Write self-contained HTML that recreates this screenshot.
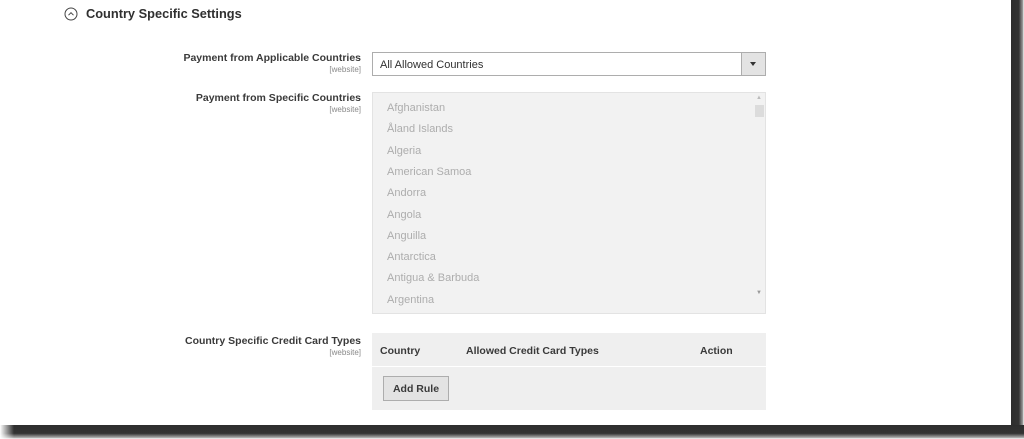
<!DOCTYPE html>
<html><head><meta charset="utf-8"><style>
*{margin:0;padding:0;box-sizing:border-box}
body{width:1024px;height:439px;background:#fff;position:relative;overflow:hidden;font-family:"Liberation Sans",sans-serif;color:#303030}
.abs{position:absolute}
.lbl{position:absolute;right:663px;text-align:right;font-size:10.5px;font-weight:bold;color:#3a3a3a;white-space:nowrap}
.lbl span{display:block;font-size:8px;font-weight:normal;color:#888;margin-top:1px}
.item{position:absolute;left:387px;font-size:11px;color:#adadad}
</style></head><body>
<div class="abs" style="left:1011px;top:0;width:13px;height:439px;background:linear-gradient(90deg,#2e2e2e 0,#333 60%,#999 90%,#fff)"></div>
<div class="abs" style="left:0;top:425px;width:1024px;height:14px;background:linear-gradient(#2e2e2e 0,#333 60%,#aaa 90%,#fff)"></div>
<div class="abs" style="left:0;top:425px;width:14px;height:14px;background:linear-gradient(90deg,#fff,rgba(255,255,255,0))"></div>
<div class="abs" style="left:0;top:0;width:1011px;height:425px;background:#fff"></div>

<svg class="abs" style="left:64px;top:7px" width="14" height="14" viewBox="0 0 14 14"><circle cx="7" cy="7" r="6" fill="none" stroke="#444" stroke-width="1"/><path d="M4.5 8.2 L7 5.7 L9.5 8.2" fill="none" stroke="#444" stroke-width="1"/></svg>
<div class="abs" style="left:86px;top:6px;font-size:12.8px;font-weight:bold;color:#303030">Country Specific Settings</div>

<div class="lbl" style="top:52px">Payment from Applicable Countries<span>[website]</span></div>
<div class="abs" style="left:372px;top:52px;width:394px;height:24px;border:1px solid #adadad;background:#fff;font-size:11px;padding:6px 7px;color:#303030">All Allowed Countries</div>
<div class="abs" style="left:741px;top:53px;width:24px;height:22px;background:#e3e3e3;border-left:1px solid #adadad"></div>
<div class="abs" style="left:750px;top:62px;width:0;height:0;border-left:3.5px solid transparent;border-right:3.5px solid transparent;border-top:4px solid #333"></div>

<div class="lbl" style="top:92px">Payment from Specific Countries<span>[website]</span></div>
<div class="abs" style="left:372px;top:92px;width:394px;height:222px;border:1px solid #e3e3e3;background:#f2f2f2"></div>
<div class="abs" style="left:755px;top:105px;width:9px;height:12px;background:#dcdcdc"></div>
<div class="abs" style="left:756px;top:95px;font-size:6px;color:#bbb">▲</div>
<div class="abs" style="left:756px;top:290px;font-size:6px;color:#999">▼</div>
<div class="item" style="top:102px">Afghanistan</div>
<div class="item" style="top:123px">Åland Islands</div>
<div class="item" style="top:145px">Algeria</div>
<div class="item" style="top:166px">American Samoa</div>
<div class="item" style="top:187px">Andorra</div>
<div class="item" style="top:209px">Angola</div>
<div class="item" style="top:230px">Anguilla</div>
<div class="item" style="top:251px">Antarctica</div>
<div class="item" style="top:272px">Antigua &amp; Barbuda</div>
<div class="item" style="top:294px">Argentina</div>

<div class="lbl" style="top:335px">Country Specific Credit Card Types<span>[website]</span></div>
<div class="abs" style="left:372px;top:333px;width:394px;height:77px;background:#efefef"></div>
<div class="abs" style="left:372px;top:366px;width:394px;height:1px;background:#fff"></div>
<div class="abs" style="left:380px;top:345px;font-size:10.5px;font-weight:bold;color:#3a3a3a">Country</div>
<div class="abs" style="left:466px;top:345px;font-size:10.5px;font-weight:bold;color:#3a3a3a">Allowed Credit Card Types</div>
<div class="abs" style="left:700px;top:345px;font-size:10.5px;font-weight:bold;color:#3a3a3a">Action</div>
<div class="abs" style="left:383px;top:376px;width:66px;height:25px;border:1px solid #adadad;background:#e3e3e3;font-size:10.5px;font-weight:bold;text-align:center;line-height:24px;color:#3a3a3a">Add Rule</div>
</body></html>
